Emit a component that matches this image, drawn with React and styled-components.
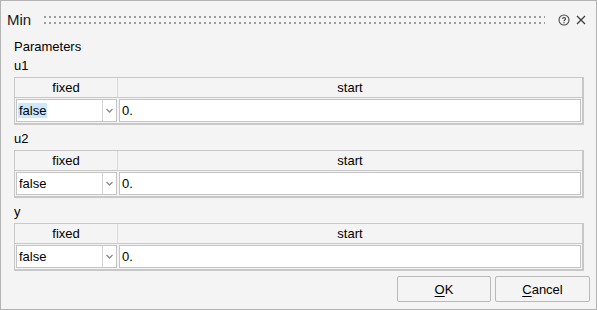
import React from 'react';
import styled, { createGlobalStyle } from 'styled-components';

const GlobalStyle = createGlobalStyle`
  html, body {
    margin: 0;
    padding: 0;
    background: #f4f4f4;
    overflow: hidden;
  }
  * {
    box-sizing: border-box;
  }
`;

const StyledWindow = styled.div`
  width: 597px;
  height: 310px;
  display: flex;
  flex-direction: column;
  background-color: #f4f4f4;
  border: 1px solid #b4b4b4;
  font-family: 'Liberation Sans', Arial, sans-serif;
  font-size: 13px;
  color: #000;
`;

const StyledTitleBar = styled.div`
  height: 36px;
  display: flex;
  align-items: center;
  padding: 0 10px 0 6px;
  gap: 13px;
`;

const StyledTitle = styled.div`
  font-size: 15px;
  color: #1a1a1a;
  padding-top: 1px;
`;

const StyledGrip = styled.div`
  flex: 1;
  height: 8px;
  display: flex;
  flex-direction: column;
  justify-content: space-between;
  margin-top: 1px;
`;

const StyledDotRow = styled.div`
  height: 2px;
  background-image: linear-gradient(
    to right,
    #9c9c9c 0 2px,
    transparent 2px 5px
  );
  background-size: 5px 2px;
`;

const StyledTitleIcons = styled.div`
  display: flex;
  align-items: center;
  gap: 6px;
  margin-top: 1px;
`;

const StyledContent = styled.div`
  flex: 1;
  display: flex;
  flex-direction: column;
  padding: 0 12px 0 13px;
`;

const StyledHeading = styled.div`
  height: 19px;
  line-height: 19px;
`;

const StyledSection = styled.div`
  display: flex;
  flex-direction: column;
  margin-bottom: 4px;
`;

const StyledLabel = styled.div`
  height: 21px;
  line-height: 19px;
`;

const StyledTable = styled.div`
  display: grid;
  grid-template-columns: 103px 1fr;
  border: 1px solid #c8c8c8;
  border-right-width: 2px;
  border-bottom-width: 2px;
  background-color: #f4f4f4;
`;

const StyledHeaderCell = styled.div`
  height: 20px;
  line-height: 20px;
  text-align: center;
  border-bottom: 1px solid #c8c8c8;
  border-right: ${({ last }) => (last ? 'none' : '1px solid #dadada')};
`;

const StyledDataCell = styled.div`
  height: 25px;
  padding: 1px;
  display: flex;
`;

const StyledCombo = styled.div`
  flex: 1;
  display: flex;
  background-color: #fff;
  border: 1px solid #c4c4c4;
`;

const StyledComboText = styled.div`
  flex: 1;
  display: flex;
  align-items: center;
  padding-left: 1px;
`;

const StyledValue = styled.span`
  background-color: ${({ selected }) => (selected ? '#cce8ff' : 'transparent')};
  padding: 0 1px;
  line-height: 15px;
`;

const StyledArrow = styled.div`
  width: 14px;
  display: flex;
  align-items: center;
  justify-content: center;
  border-left: 1px solid #d4d4d4;
`;

const StyledInput = styled.div`
  flex: 1;
  display: flex;
  align-items: center;
  padding-left: 2px;
  background-color: #fff;
  border: 1px solid #c4c4c4;
`;

const StyledFooter = styled.div`
  display: flex;
  justify-content: flex-end;
  gap: 4px;
  padding-top: 1px;
  margin-right: -6px;
`;

const StyledButton = styled.button`
  width: ${({ wide }) => (wide ? '95px' : '94px')};
  flex-shrink: 0;
  height: 26px;
  font-family: inherit;
  font-size: 13px;
  color: #000;
  background-color: #f4f4f4;
  border: 1px solid #b9b9b9;
  border-radius: 2px;
  padding: 0;
  u {
    text-decoration-thickness: 1px;
    text-underline-offset: 2px;
  }
`;

const HelpIcon = () => (
  <svg width="12" height="12" viewBox="0 0 12 12">
    <circle cx="6" cy="6" r="5" fill="none" stroke="#4a4a4a" strokeWidth="1.1" />
    <path
      d="M4.4 4.8 C4.4 3.2 7.6 3.2 7.6 4.8 C7.6 6 6 5.9 6 7.2"
      fill="none"
      stroke="#4a4a4a"
      strokeWidth="1.1"
    />
    <rect x="5.4" y="8.1" width="1.2" height="1.2" fill="#4a4a4a" />
  </svg>
);

const CloseIcon = () => (
  <svg width="10" height="10" viewBox="0 0 10 10">
    <path d="M1 1 L9 9 M9 1 L1 9" stroke="#3a3a3a" strokeWidth="1.2" />
  </svg>
);

const ChevronIcon = () => (
  <svg width="7" height="5" viewBox="0 0 7 5">
    <path d="M0.5 1 L3.5 4 L6.5 1" fill="none" stroke="#8a8a8a" strokeWidth="1.3" />
  </svg>
);

const params = [
  { name: 'u1', fixed: 'false', start: '0.', selected: true },
  { name: 'u2', fixed: 'false', start: '0.' },
  { name: 'y', fixed: 'false', start: '0.' },
];

const ParamTable = ({ name, fixed, start, selected }) => (
  <StyledSection>
    <StyledLabel>{name}</StyledLabel>
    <StyledTable>
      <StyledHeaderCell>fixed</StyledHeaderCell>
      <StyledHeaderCell last>start</StyledHeaderCell>
      <StyledDataCell>
        <StyledCombo>
          <StyledComboText>
            <StyledValue selected={selected}>{fixed}</StyledValue>
          </StyledComboText>
          <StyledArrow>
            <ChevronIcon />
          </StyledArrow>
        </StyledCombo>
      </StyledDataCell>
      <StyledDataCell>
        <StyledInput>{start}</StyledInput>
      </StyledDataCell>
    </StyledTable>
  </StyledSection>
);

const App = () => (
  <>
    <GlobalStyle />
    <StyledWindow>
      <StyledTitleBar>
        <StyledTitle>Min</StyledTitle>
        <StyledGrip>
          <StyledDotRow />
          <StyledDotRow />
        </StyledGrip>
        <StyledTitleIcons>
          <HelpIcon />
          <CloseIcon />
        </StyledTitleIcons>
      </StyledTitleBar>
      <StyledContent>
        <StyledHeading>Parameters</StyledHeading>
        {params.map((p) => (
          <ParamTable key={p.name} {...p} />
        ))}
        <StyledFooter>
          <StyledButton>
            <u>O</u>K
          </StyledButton>
          <StyledButton wide>
            <u>C</u>ancel
          </StyledButton>
        </StyledFooter>
      </StyledContent>
    </StyledWindow>
  </>
);

export default App;
